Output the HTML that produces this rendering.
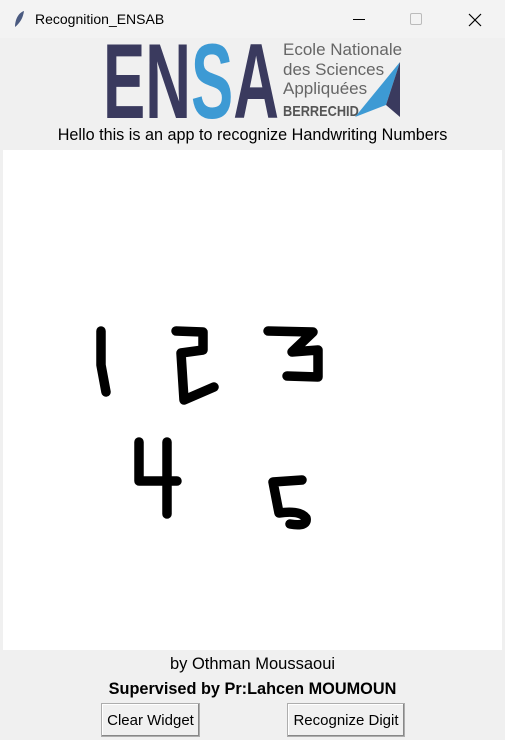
<!DOCTYPE html>
<html><head><style>
body{margin:0;width:505px;height:740px;background:#f0f0f0;font-family:"Liberation Sans",sans-serif;position:relative;overflow:hidden}
.tb{position:absolute;left:0;top:0;width:505px;height:38px;background:#f3f3f3}
.abs{position:absolute}
.btn{position:absolute;top:703px;height:34px;background:#f0f0f0;border:1px solid #adadad;box-shadow:inset -1px -1px #888,inset 1px 1px #fff;font-size:15px;display:flex;align-items:center;justify-content:center;box-sizing:border-box}
</style></head><body>
<div class="tb"></div>
<svg class="abs" style="left:12px;top:10px" width="14" height="18"><path d="M3 17 C3 10 6 3 12 1 C11 8 8 13 3 17Z" fill="#4a5a80"/></svg>
<div class="abs" style="left:35px;top:11px;font-size:14px;color:#000">Recognition_ENSAB</div>
<div class="abs" style="left:353px;top:19px;width:12px;height:1px;background:#000"></div>
<div class="abs" style="left:410px;top:13px;width:10px;height:10px;border:1px solid #bbb;border-radius:2px"></div>
<svg class="abs" style="left:468px;top:13px" width="14" height="14"><path d="M1 1L13 13M13 1L1 13" stroke="#000" stroke-width="1.2"/></svg>
<svg class="abs" style="left:0;top:0" width="505" height="130"><text x="103" y="118" font-family="Liberation Sans" font-weight="bold" font-size="107" textLength="176" lengthAdjust="spacingAndGlyphs" fill="#3a3a5e">EN<tspan fill="#3d9ad4">S</tspan>A</text></svg>
<div class="abs" style="left:283px;top:40px;font-size:17px;line-height:19.5px;color:#666">Ecole Nationale<br>des Sciences<br>Appliquées</div>
<div class="abs" style="left:283px;top:103px;font-size:15px;font-weight:bold;color:#555;transform:scaleX(0.85);transform-origin:left">BERRECHID</div>
<svg class="abs" style="left:352px;top:60px" width="50" height="60"><path d="M48 2L3 57L34 45Z" fill="#3d9ad4"/><path d="M48 2L34 45L48 57Z" fill="#3a3a5e"/></svg>
<div class="abs" style="left:0;width:505px;top:126px;text-align:center;font-size:16.2px">Hello this is an app to recognize Handwriting Numbers</div>
<svg class="abs" style="left:3px;top:150px" width="499" height="500" viewBox="3 150 499 500"><rect x="3" y="150" width="499" height="500" fill="#fff"/>
<g fill="none" stroke="#000" stroke-width="9.5" stroke-linecap="round" stroke-linejoin="round">
<path d="M101 331L101 365L106 392"/>
<path d="M176 331L203 332L203 350L181 353L184 400L214 387"/>
<path d="M268 331L313 332L292 352L318 350L318 377L287 376"/>
<path d="M139 442L139 481L177 481M167 442L167 514"/>
<path d="M302 480L273 482L279 513Q300 510 306 518Q308 527 290 524"/>
</g></svg>
<div class="abs" style="left:0;width:505px;top:655px;text-align:center;font-size:16.5px">by Othman Moussaoui</div>
<div class="abs" style="left:0;width:505px;top:680px;text-align:center;font-size:16.3px;font-weight:bold">Supervised by Pr:Lahcen MOUMOUN</div>
<div class="btn" style="left:101px;width:99px">Clear Widget</div>
<div class="btn" style="left:287px;width:118px">Recognize Digit</div>
</body></html>
